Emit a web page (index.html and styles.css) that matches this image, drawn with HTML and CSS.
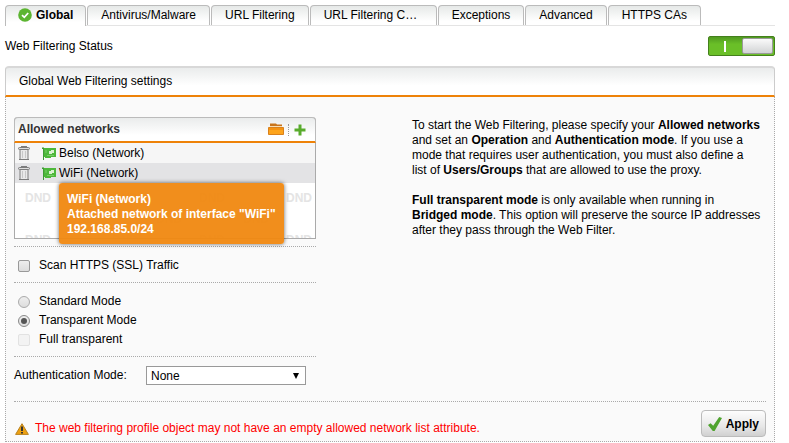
FILE: index.html
```html
<!DOCTYPE html>
<html lang="en">
<head>
    <meta charset="UTF-8">
    <meta name="viewport" content="width=device-width, initial-scale=1.0">
    <title>Web Filtering</title>
    <link rel="stylesheet" href="styles.css">
</head>
<body>
    <nav class="tabs">
        <a href="#global" class="tab active">
            <svg class="tab-icon" viewBox="0 0 14 14" width="14" height="14">
                <circle cx="7" cy="7" r="6.8" fill="#5cb531"/>
                <path d="M4 7.2 L6.3 9.4 L10.2 5" fill="none" stroke="#fff" stroke-width="1.7"/>
            </svg>
            Global
        </a>
        <a href="#antivirus" class="tab">Antivirus/Malware</a>
        <a href="#url" class="tab">URL Filtering</a>
        <a href="#categories" class="tab tab-long">URL Filtering C…</a>
        <a href="#exceptions" class="tab">Exceptions</a>
        <a href="#advanced" class="tab">Advanced</a>
        <a href="#cas" class="tab">HTTPS CAs</a>
    </nav>

    <div class="status">
        <label for="status">Web Filtering Status</label>
        <input type="checkbox" id="status" class="switch" checked>
    </div>

    <main class="panel">
        <h1 class="panel-title">Global Web Filtering settings</h1>

        <form class="panel-body">
            <div class="columns">
                <div class="settings">
                    <!-- Allowed networks -->
                    <div class="list">
                        <div class="list-head">
                            <h2>Allowed networks</h2>
                            <button type="button" class="icon-btn" aria-label="Browse">
                                <svg viewBox="0 0 16 13" width="16" height="13">
                                    <path d="M2 4 V0.5 H8 L9 1.5 H14 V4 Z" fill="#c9741b"/>
                                    <path d="M2 3 H14 V5 H2 Z" fill="#f6dcb4"/>
                                    <path d="M0.5 4.5 H15.5 V11.5 H0.5 Z" fill="#fda41c" stroke="#d9811c"/>
                                    <path d="M1 5 H15 V7 H1 Z" fill="#f59312"/>
                                </svg>
                            </button>
                            <button type="button" class="icon-btn add" aria-label="Add">
                                <svg viewBox="0 0 12 12" width="12" height="12">
                                    <path d="M4.5 0.5 H7.5 V4.5 H11.5 V7.5 H7.5 V11.5 H4.5 V7.5 H0.5 V4.5 H4.5 Z" fill="#58ab2c"/>
                                </svg>
                            </button>
                        </div>
                        <ul class="rows">
                            <li class="row">
                                <button type="button" class="icon-btn" aria-label="Remove Belso">
                                    <svg viewBox="0 0 12 15" width="12" height="15" fill="none" stroke="#7c7c7c">
                                        <path d="M2 3.5 H10 V13.5 H2 Z" fill="#e9e9e9"/>
                                        <path d="M3 0.5 H9 M1 13.5 H11"/>
                                        <rect x="0.5" y="1.5" width="11" height="2" rx="1" fill="#ddd"/>
                                        <path d="M4.5 5 V12 M7.5 5 V12" stroke="#c8c8c8"/>
                                    </svg>
                                </button>
                                <svg class="net-icon" viewBox="0 0 14 13" width="14" height="13">
                                    <path d="M0 0.5 H2 V13 H1 V2 H0 Z" fill="#3f9a35"/>
                                    <path d="M2 1 H14 V10 H9 V11 H3 V10 H2 Z" fill="#4db83a"/>
                                    <path d="M7 4 H9 V3 H12 V6 H10 V7 H7 Z" fill="#d9f2d0"/>
                                    <path d="M4 3 V6 M5 8.5 H12" stroke="#79cc68"/>
                                </svg>
                                <span>Belso (Network)</span>
                            </li>
                            <li class="row selected">
                                <button type="button" class="icon-btn" aria-label="Remove WiFi">
                                    <svg viewBox="0 0 12 15" width="12" height="15" fill="none" stroke="#7c7c7c">
                                        <path d="M2 3.5 H10 V13.5 H2 Z" fill="#e9e9e9"/>
                                        <path d="M3 0.5 H9 M1 13.5 H11"/>
                                        <rect x="0.5" y="1.5" width="11" height="2" rx="1" fill="#ddd"/>
                                        <path d="M4.5 5 V12 M7.5 5 V12" stroke="#c8c8c8"/>
                                    </svg>
                                </button>
                                <svg class="net-icon" viewBox="0 0 14 13" width="14" height="13">
                                    <path d="M0 0.5 H2 V13 H1 V2 H0 Z" fill="#3f9a35"/>
                                    <path d="M2 1 H14 V10 H9 V11 H3 V10 H2 Z" fill="#4db83a"/>
                                    <path d="M7 4 H9 V3 H12 V6 H10 V7 H7 Z" fill="#d9f2d0"/>
                                    <path d="M4 3 V6 M5 8.5 H12" stroke="#79cc68"/>
                                </svg>
                                <span>WiFi (Network)</span>
                                <div class="tooltip" role="tooltip">WiFi (Network)<br>Attached network of interface "WiFi"<br>192.168.85.0/24</div>
                            </li>
                        </ul>
                        <!-- Drop zone -->
                        <div class="dropzone" aria-hidden="true">
                            <div class="dnd"><span>DND</span><span>DND</span><span>DND</span><span>DND</span></div>
                            <div class="dnd shifted"><span>DND</span><span>DND</span><span>DND</span></div>
                            <div class="dnd"><span>DND</span><span>DND</span><span>DND</span><span>DND</span></div>
                        </div>
                    </div>

                    <div class="group">
                        <div class="option">
                            <input type="checkbox" id="scan">
                            <label for="scan">Scan HTTPS (SSL) Traffic</label>
                        </div>
                    </div>

                    <div class="group">
                        <div class="option">
                            <input type="radio" name="mode" id="standard">
                            <label for="standard">Standard Mode</label>
                        </div>
                        <div class="option">
                            <input type="radio" name="mode" id="transparent" checked>
                            <label for="transparent">Transparent Mode</label>
                        </div>
                        <div class="option">
                            <input type="checkbox" id="full" disabled>
                            <label for="full">Full transparent</label>
                        </div>
                    </div>

                    <div class="group auth">
                        <label for="auth">Authentication Mode:</label>
                        <div class="select">
                            <select id="auth">
                                <option>None</option>
                            </select>
                        </div>
                    </div>
                </div>

                <div class="help">
                    <p>To start the Web Filtering, please specify your <b>Allowed networks</b><br>
                    and set an <b>Operation</b> and <b>Authentication mode</b>. If you use a<br>
                    mode that requires user authentication, you must also define a<br>
                    list of <b>Users/Groups</b> that are allowed to use the proxy.</p>
                    <p><b>Full transparent mode</b> is only available when running in<br>
                    <b>Bridged mode</b>. This option will preserve the source IP addresses<br>
                    after they pass through the Web Filter.</p>
                </div>
            </div>

            <div class="footer">
                <p class="warning">
                    <svg viewBox="0 0 14 12" width="14" height="12">
                        <path d="M7 0.7 L13.4 11.4 H0.6 Z" fill="#eda010" stroke="#b9811c" stroke-linejoin="round"/>
                        <path d="M7 3.6 V8" stroke="#333" stroke-width="2"/>
                        <path d="M7 9 V10.5" stroke="#333" stroke-width="2"/>
                    </svg>
                    The web filtering profile object may not have an empty allowed network list attribute.
                </p>
                <button type="button" class="apply">
                    <svg viewBox="0 0 14 14" width="14" height="14">
                        <path d="M0 8 L2.6 6.2 L5.2 8.8 L11.2 0 L14 1 L6.6 14 H4.8 Z" fill="#4fa32e"/>
                    </svg>
                    Apply
                </button>
            </div>
        </form>
    </main>
</body>
</html>
```
FILE: styles.css
```css
*, *::before, *::after {
    box-sizing: border-box;
}

body {
    margin: 0;
    padding: 5px 14px 0 5px;
    background: #fff;
    color: #000;
    font-family: "Liberation Sans", Arial, sans-serif;
    font-size: 12px;
    line-height: 15px;
}

h1, h2, p, ul {
    margin: 0;
    padding: 0;
}

button, select {
    font-family: inherit;
    font-size: 12px;
    color: inherit;
}

svg {
    display: block;
    flex: none;
}

/* Tabs */
.tabs {
    display: flex;
    gap: 1px;
    border-bottom: 1px solid #e4e4e4;
}

.tab {
    display: flex;
    align-items: center;
    height: 20px;
    padding: 0 13px;
    border: 1px solid #bbb;
    border-bottom: 0;
    border-radius: 4px 4px 0 0;
    background: linear-gradient(#e6e9e8, #fff 80%);
    color: #000;
    text-decoration: none;
    white-space: nowrap;
}

.tab.active {
    height: 21px;
    margin-bottom: -1px;
    padding: 0 12px 2px;
    font-weight: bold;
}

.tab-icon {
    margin-right: 4px;
}

.tab-long {
    min-width: 127px;
}

/* Status */
.status {
    display: flex;
    align-items: center;
    justify-content: space-between;
    height: 40px;
}

.switch {
    appearance: none;
    display: flex;
    align-items: center;
    justify-content: space-between;
    width: 67px;
    height: 20px;
    margin: 0;
    padding: 0 1px 0 15px;
    border: 1px solid #44801c;
    border-radius: 2px;
    background: linear-gradient(#509a20, #6abf28 40%);
}

.switch::before {
    content: "";
    width: 2px;
    height: 11px;
    background: #fff;
}

.switch::after {
    content: "";
    width: 31px;
    height: 16px;
    border: 1px solid #999;
    border-radius: 2px;
    background: linear-gradient(#fafafa, #d2d4d5);
}

/* Panel */
.panel-title {
    height: 31px;
    padding: 6px 13px;
    border: 1px solid #ccc;
    border-top: 2px solid #d8d8d8;
    border-bottom: 2px solid #ee8208;
    border-radius: 4px 4px 0 0;
    background: linear-gradient(#eaecec, #fff 65%);
    font-size: 12px;
    font-weight: normal;
    line-height: 15px;
}

.panel-body {
    padding: 20px 8px 4px;
    border: 1px dotted #aaa;
    border-top: 0;
    background: #fafafa;
}

.columns {
    display: grid;
    grid-template-columns: 302px 1fr;
    gap: 96px;
}

/* List of networks */
.list {
    margin-bottom: 7px;
    border: 1px solid #aaa;
    border-top: 0;
    border-radius: 4px 4px 0 0;
    background: #fff;
}

.list-head {
    display: flex;
    align-items: center;
    height: 26px;
    margin: 0 -1px;
    padding: 0 9px 0 3px;
    border: 1px solid #bbb;
    border-bottom: 2px solid #ee8208;
    border-radius: 4px 4px 0 0;
    background: linear-gradient(#eaecec, #fff 75%);
}

.list-head h2 {
    flex: 1;
    color: #333;
    font-size: 12px;
    line-height: 15px;
}

.icon-btn {
    padding: 0;
    border: 0;
    background: none;
    cursor: pointer;
}

.add {
    margin-left: 4px;
    padding-left: 5px;
    border-left: 1px dotted #999;
}

.rows {
    list-style: none;
}

.row {
    position: relative;
    display: flex;
    align-items: center;
    height: 20px;
    padding-left: 3px;
    background: #f6f6f6;
}

.row.selected {
    background: #e3e3e5;
}

.net-icon {
    margin: 0 3px 0 12px;
}

.tooltip {
    position: absolute;
    top: 20px;
    left: 44px;
    z-index: 1;
    padding: 9px 8px 7px;
    border-radius: 3px;
    background: rgba(240, 136, 16, 0.95);
    box-shadow: 0 0 4px rgba(0, 0, 0, 0.6);
    color: #fff;
    font-weight: bold;
    white-space: nowrap;
}

.dropzone {
    height: 55px;
    padding-top: 5px;
    overflow: hidden;
}

.dnd {
    display: flex;
    gap: 61px;
    padding-left: 10px;
    color: #e4e4e4;
    font-weight: bold;
    line-height: 21px;
}

.dnd.shifted {
    padding-left: 54px;
}

/* Options */
.group {
    padding: 9px 0 7px;
    border-top: 1px dotted #aaa;
}

.option {
    display: flex;
    align-items: center;
    gap: 9px;
    height: 19px;
    padding-left: 4px;
}

.option input {
    appearance: none;
    width: 12px;
    height: 12px;
    margin: 0;
    border: 1px solid #999;
    border-radius: 2px;
    background: linear-gradient(#eee, #ddd);
}

.option input[type="radio"] {
    display: flex;
    align-items: center;
    justify-content: center;
    border-color: #aaa;
    border-radius: 50%;
}

.option input[type="radio"]:checked {
    border-color: #888;
}

.option input[type="radio"]:checked::before {
    content: "";
    width: 6px;
    height: 6px;
    border-radius: 50%;
    background: #555;
}

.option input:disabled {
    border-color: #e2e2e2;
    background: #f3f3f3;
}

.auth {
    display: flex;
    align-items: center;
    padding-bottom: 16px;
}

.auth label {
    width: 132px;
}

.select {
    display: flex;
    align-items: center;
    width: 160px;
    height: 19px;
    border: 1px solid #999;
    background: #fff;
}

.select select {
    appearance: none;
    flex: 1;
    padding: 0 4px;
    border: 0;
    background: none;
}

.select::after {
    content: "";
    margin-right: 6px;
    border: 3px solid transparent;
    border-top: 6px solid #000;
    border-bottom: 0;
}

.help {
    padding-top: 1px;
    white-space: nowrap;
}

.help p {
    margin-bottom: 15px;
}

/* Footer */
.footer {
    display: flex;
    align-items: flex-end;
    justify-content: space-between;
    padding-top: 8px;
    border-top: 1px dotted #aaa;
}

.warning {
    display: flex;
    align-items: center;
    gap: 6px;
    padding: 0 0 1px 1px;
    color: #f00;
}

.apply {
    display: flex;
    align-items: center;
    gap: 4px;
    height: 27px;
    padding: 0 6px;
    border: 1px solid #bbb;
    border-radius: 4px;
    background: linear-gradient(#fdfdfd, #e8e8e8 60%, #d0d0d0);
    font-weight: bold;
}
```
